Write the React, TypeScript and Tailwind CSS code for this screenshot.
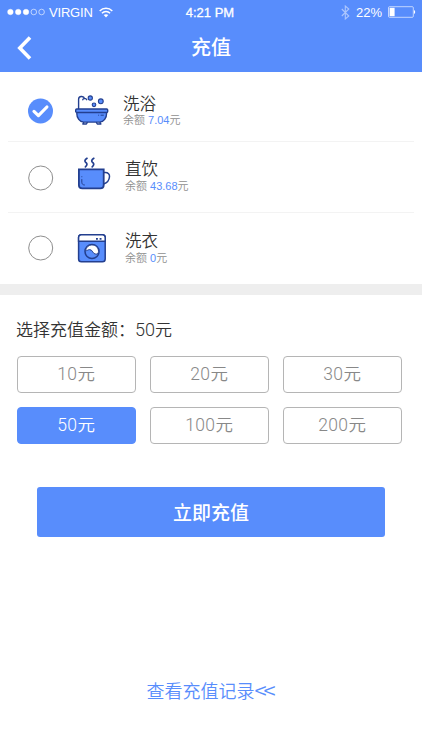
import { useState } from "react";
import type { ReactNode } from "react";

interface Account {
  id: string;
  name: string;
  balance: string;
  icon: ReactNode;
  rowClass: string;
  textClass: string;
}

const AMOUNTS = [10, 20, 30, 50, 100, 200];

function BathIcon() {
  return (
    <svg width="38" height="36" viewBox="0 0 38 36" fill="none" stroke="#233f8f" strokeWidth="1.4" strokeLinecap="round" strokeLinejoin="round">
      <path d="M4.6 17V6.2C4.6 2.9 9.8 2.5 10.6 5.6M8.8 6.7c.4-1.6 3.2-1.8 3.9 0" />
      <circle cx="16.3" cy="5" r="2.1" fill="#588dfc" strokeWidth="1.1" />
      <circle cx="26.8" cy="8.3" r="2.4" fill="#588dfc" strokeWidth="1.1" />
      <circle cx="20" cy="11.8" r="1.8" fill="#588dfc" strokeWidth="1.1" />
      <path d="M9.6 29.6l-.8 1.4h3.6l.8-1.4M22.5 29.6l.8 1.4h3.6l-.8-1.4" />
      <path d="M2.7 19.5h30c0 5.6-3 9.6-7 9.6h-16c-4 0-7-4-7-9.6z" fill="#588dfc" />
      <rect x="1.7" y="16" width="32" height="3.4" rx="1" fill="#588dfc" />
      <path d="M24.6 22.2h.1M27 22.2h2.4" strokeWidth="1" />
    </svg>
  );
}

function CupIcon() {
  return (
    <svg width="38" height="42" viewBox="0 0 38 42" fill="none" stroke="#233f8f" strokeWidth="1.8" strokeLinecap="round" strokeLinejoin="round">
      <path d="M13 1.3c-2.8 2-2.5 3.2-.9 4.4 1.3 1.2 1.1 2.6-.7 4.2M19.8 1.3c-2.8 2-2.5 3.2-.9 4.4 1.3 1.2 1.1 2.6-.7 4.2" strokeWidth="1.7" />
      <path d="M30 15.5h1.3c2.9 0 4.4 1.7 4.2 4.2-.3 3.8-2.9 6.3-5.9 7.3" strokeWidth="1.5" />
      <path d="M4.9 12.4h24.8v15.8c0 2-1.3 3.2-3.4 3.2h-18c-2.1 0-3.4-1.2-3.4-3.2z" fill="#588dfc" strokeLinejoin="miter" />
      <path d="M7.8 19.7v.1M7.8 22.5v2.7c0 1.7.9 2.7 2.6 2.8" strokeWidth="1" />
    </svg>
  );
}

function WasherIcon() {
  return (
    <svg width="38" height="36" viewBox="0 0 38 36" fill="none" stroke="#233f8f" strokeWidth="1.5">
      <rect x="4.6" y="4.8" width="26.6" height="27" rx="2.8" fill="#588dfc" />
      <path d="M4.6 11.3V7.6c0-1.9.9-2.8 2.8-2.8h21c1.9 0 2.8.9 2.8 2.8v3.7z" fill="#fff" />
      <path d="M22 8.8h1.9M25.6 8.8h1.9" strokeWidth="1.8" />
      <circle cx="18" cy="21.5" r="7" fill="#588dfc" />
      <path d="M11.6 20.6c.5-3.4 3.1-5.7 6.3-5.7 3.9 0 6.6 2.9 6.6 6.4 0 1.6-.9 2.9-2.5 2.9-3.6 0-3-4.6-6.4-4.6-1.8 0-2.4 1.4-4 1z" fill="#fff" strokeWidth="1" />
    </svg>
  );
}

const ACCOUNTS: Account[] = [
  { id: "bath", name: "洗浴", balance: "7.04", icon: <BathIcon />, rowClass: "h-[69px] pt-[8px]", textClass: "pl-[11px] pt-px" },
  { id: "drink", name: "直饮", balance: "43.68", icon: <CupIcon />, rowClass: "h-[70px] pt-px", textClass: "pl-[13px] pb-[2px] gap-[1px]" },
  { id: "laundry", name: "洗衣", balance: "0", icon: <WasherIcon />, rowClass: "h-[71px] pb-[2px]", textClass: "pl-[13px] pt-[2px] gap-[1px]" },
];

function StatusBar() {
  return (
    <div className="grid h-6 grid-cols-3 grid-rows-[24px] items-center pl-[7px] pr-[6px] text-[13px]">
      <div className="flex items-center">
        <svg width="39" height="8" viewBox="0 0 39 8" fill="#fff" stroke="#fff">
          <circle cx="3.4" cy="4" r="2.8" strokeWidth=".4" />
          <circle cx="11.2" cy="4" r="2.8" strokeWidth=".4" />
          <circle cx="19" cy="4" r="2.8" strokeWidth=".4" />
          <circle cx="26.8" cy="4" r="2.8" fill="none" strokeWidth=".6" />
          <circle cx="34.6" cy="4" r="2.8" fill="none" strokeWidth=".6" />
        </svg>
        <span className="ml-[3px] w-[44px] whitespace-nowrap pt-px leading-none tracking-[-0.2px]">VIRGIN</span>
        <svg className="ml-[6px]" width="14" height="11" viewBox="0 0 14 11" fill="none" stroke="#fff" strokeWidth="1.5">
          <path d="M.7 4c3.5-3.6 9.1-3.6 12.6 0M2.9 6.3c2.3-2.3 5.9-2.3 8.2 0" />
          <path d="M7 10.4L4.7 8.1c1.3-1.2 3.3-1.2 4.6 0z" fill="#fff" stroke="none" />
        </svg>
      </div>
      <span className="pr-[3px] pt-px text-center leading-none [-webkit-text-stroke:0.3px_white]">4:21 PM</span>
      <div className="flex items-center justify-end">
        <svg width="9" height="15" viewBox="0 0 9 15" fill="none" stroke="#fff" strokeWidth="1.1" opacity=".5">
          <path d="M.8 4l7 7-3.5 3V1l3.5 3-7 7" />
        </svg>
        <span className="ml-[6px] w-[28px] whitespace-nowrap pt-px leading-none">22%</span>
        <svg className="ml-[4px]" width="28" height="12" viewBox="0 0 28 12" fill="none" stroke="#fff">
          <rect x=".5" y=".7" width="24.8" height="10.6" rx="1" strokeWidth=".8" opacity=".8" />
          <rect x="1.6" y="1.8" width="5" height="8.4" fill="#fff" stroke="none" />
          <path d="M26 4c1.6.6 1.6 3.4 0 4z" fill="#fff" stroke="none" />
        </svg>
      </div>
    </div>
  );
}

function Radio({ checked }: { checked: boolean }) {
  return (
    <svg width="26" height="26" viewBox="0 0 26 26" fill="none">
      {checked ? (
        <>
          <circle cx="12.5" cy="13" r="12.5" fill="#588dfc" />
          <path d="M6 13.4l4.4 4.2 8.5-8.6" stroke="#fff" strokeWidth="3.2" strokeLinecap="round" strokeLinejoin="round" />
        </>
      ) : (
        <circle cx="12.7" cy="13" r="12" stroke="#8e8e8e" strokeWidth="1" />
      )}
    </svg>
  );
}

export default function App() {
  const [account, setAccount] = useState("bath");
  const [amount, setAmount] = useState(50);

  return (
    <div className="flex min-h-[750px] w-full flex-col bg-white font-['Liberation_Sans','Noto_Sans_CJK_SC',sans-serif] text-[#333]">
      <header className="h-[72px] bg-[#588dfc] text-white">
        <StatusBar />
        <div className="grid h-12 grid-cols-[60px_1fr_60px] items-center">
          <button className="pl-[17px]" aria-label="返回">
            <svg width="16" height="24" viewBox="0 0 16 24" fill="none" stroke="#fff" strokeWidth="3.6">
              <path d="M13 1.6L2.8 12 13 22.4" />
            </svg>
          </button>
          <h1 className="text-center text-[20px] font-medium leading-[46px]">充值</h1>
        </div>
      </header>

      <div>
        {ACCOUNTS.map((a, i) => (
          <div key={a.id} className={`mx-2 ${i < ACCOUNTS.length - 1 ? "border-b border-[#f3f3f3]" : ""}`}>
            <button className={`flex w-full items-center pl-[20px] text-left ${a.rowClass}`} onClick={() => setAccount(a.id)}>
              <Radio checked={account === a.id} />
              <span className="ml-5">{a.icon}</span>
              <span className={`flex flex-col ${a.textClass}`}>
                <span className="text-[16.5px] font-[350] leading-[18px]">{a.name}</span>
                <span className="text-[11px] font-[350] leading-[15px] text-[#8f8f8f]">
                  余额 <span className="text-[#588dfc]">{a.balance}</span>元
                </span>
              </span>
            </button>
          </div>
        ))}
      </div>

      <div className="h-[11px] bg-[#eee]" />

      <section className="px-[17px] pt-[23px]">
        <h2 className="-ml-px h-6 font-['Roboto','Noto_Sans_CJK_SC',sans-serif] text-[17px] font-[350] leading-6">
          选择充值金额：<span className="text-[18px] leading-none">{amount}</span>元
        </h2>
        <div className="mt-[14px] grid grid-cols-[118.5px_118.5px_118.5px] gap-x-[14.5px] gap-y-[14px]">
          {AMOUNTS.map((n) => (
            <button
              key={n}
              onClick={() => setAmount(n)}
              className={`h-[37px] rounded-[4px] border font-['Roboto','Noto_Sans_CJK_SC',sans-serif] text-[17.5px] font-[350] leading-[35px] tracking-[0.4px] ${
                n === amount ? "border-[#588dfc] bg-[#588dfc] text-white" : "border-[#b5b5b5] text-[#888]"
              }`}
            >
              {n}元
            </button>
          ))}
        </div>
      </section>

      <button className="ml-[37px] mt-[43px] h-[50px] w-[348px] rounded-[3px] bg-[#588dfc] pt-[4px] text-[19px] font-medium text-white">
        立即充值
      </button>

      <button className="mt-[141px] h-6 pr-[3px] text-center font-['Noto_Sans_CJK_SC',sans-serif] text-[18px] font-[350] leading-6 text-[#588dfc]">
        查看充值记录<span className="align-[-1px] text-[22px] font-[350] leading-none tracking-[-3px]">&lt;&lt;</span>
      </button>
    </div>
  );
}
